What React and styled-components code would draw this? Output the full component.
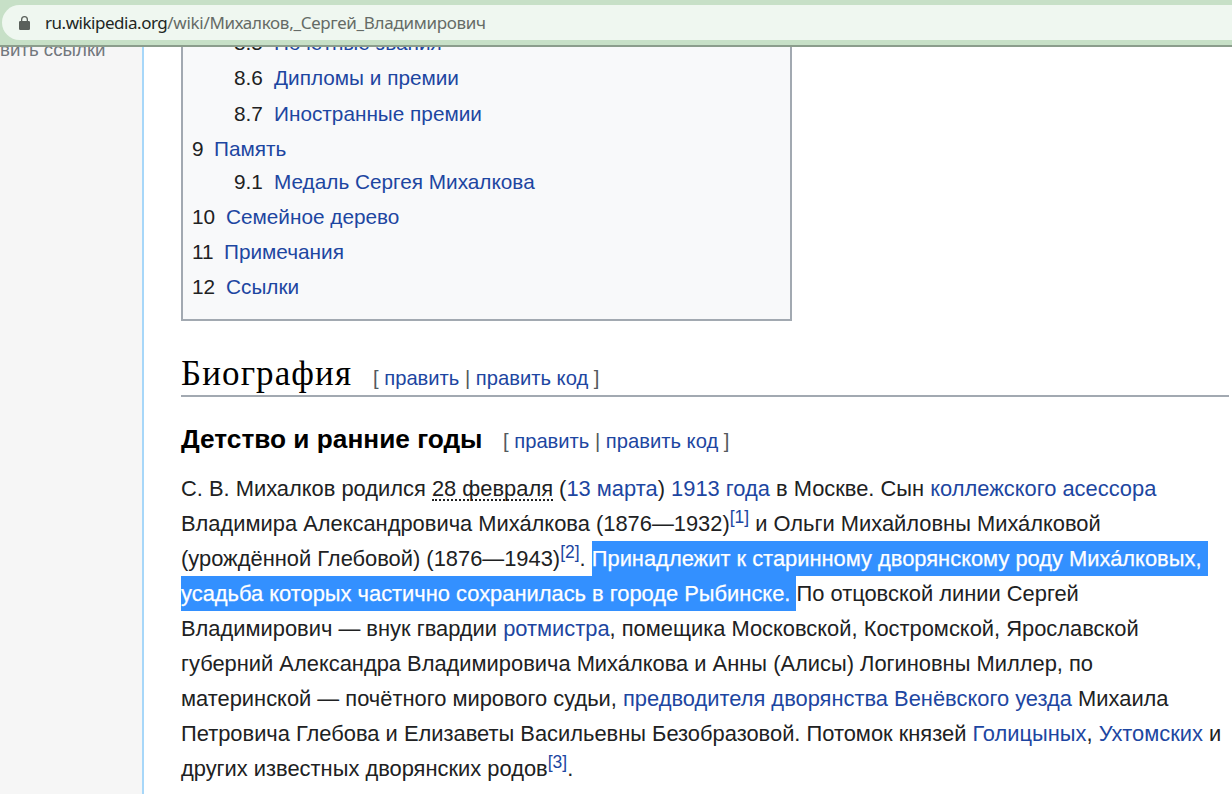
import styled, { createGlobalStyle } from 'styled-components';

const GlobalStyle = createGlobalStyle`
  * {
    box-sizing: border-box;
  }
  body {
    margin: 0;
    overflow: hidden;
    background: #ffffff;
    color: #202122;
    font-family: 'Liberation Sans', Arial, sans-serif;
  }
`;

const Page = styled.div`
  display: flex;
  flex-direction: column;
  height: 794px;
  overflow: hidden;
`;

const Toolbar = styled.header`
  flex: none;
  height: 47px;
  padding: 5px 0 5px 2px;
  background: #c7e0c7;
  border-bottom: 2px solid #8b9d8c;
`;

const AddressBar = styled.div`
  display: flex;
  align-items: center;
  height: 35px;
  padding-left: 17px;
  border-radius: 18px 0 0 18px;
  background: #eff7f0;
`;

const LockIcon = styled.svg`
  width: 11px;
  height: 14px;
  margin-right: 15px;
  fill: #5a605b;
`;

const Url = styled.span`
  color: #656b66;
  font-family: 'Noto Sans', 'Open Sans', sans-serif;
  font-size: 17px;
  letter-spacing: -0.3px;
  white-space: nowrap;
`;

const Host = styled.span`
  color: #222623;
  letter-spacing: -0.47px;
`;

const Main = styled.div`
  display: flex;
  flex: 1;
  min-height: 0;
  overflow: hidden;
`;

const Sidebar = styled.aside`
  flex: none;
  width: 144px;
  overflow: hidden;
  background: #f6f6f6;
  border-right: 2px solid #a7d7f9;
`;

const SidebarItem = styled.div`
  margin-top: -10px;
  color: #72777d;
  font-size: 18.7px;
  line-height: 26px;
  white-space: nowrap;
`;

const Article = styled.main`
  flex: 1;
  min-width: 0;
  padding: 0 3px 0 37px;
`;

const Toc = styled.nav`
  width: 611px;
  height: 296px;
  margin-top: -22px;
  padding-left: 9px;
  background: #f8f9fa;
  border: 2px solid #a2a9b1;
  border-top: none;
`;

const TocRow = styled.div`
  display: flex;
  height: ${({ $height }) => $height || 35}px;
  padding-left: ${({ $nested }) => ($nested ? 42 : 0)}px;
  font-size: 20.78px;
  line-height: 35px;
  white-space: nowrap;
`;

const TocNumber = styled.span`
  width: ${({ $width }) => $width}px;
`;

const Link = styled.a`
  color: #1d46a1;
`;

const SectionTitle = styled.h2`
  display: flex;
  align-items: baseline;
  height: 42px;
  margin: 34px 0 0;
  border-bottom: 2px solid #a2a9b1;
  color: #000000;
  font-family: 'Liberation Serif', serif;
  font-size: 35px;
  font-weight: 400;
  line-height: 38px;
`;

const SubsectionTitle = styled.h3`
  display: flex;
  align-items: baseline;
  height: 40px;
  margin: 23px 0 11px;
  color: #000000;
  font-size: 26.25px;
  font-weight: 700;
  line-height: 39px;
`;

const TitleText = styled.span`
  width: ${({ $width }) => $width}px;
  letter-spacing: ${({ $spacing }) => $spacing || 0}px;
  white-space: nowrap;
`;

const EditSection = styled.span`
  color: #54595d;
  font-family: 'Liberation Sans', Arial, sans-serif;
  font-size: 20.2px;
  font-weight: 400;
  white-space: nowrap;
`;

const Line = styled.div`
  height: 35px;
  font-size: 21.88px;
  line-height: 35px;
  white-space: pre;
`;

const OldDate = styled.abbr`
  display: inline-block;
  height: 24px;
  border-bottom: 2px dotted #202122;
  line-height: 24px;
  text-decoration: none;
`;

const Ref = styled.sup`
  color: #1d46a1;
  font-size: 17.5px;
  line-height: 1;
`;

const Selected = styled.span`
  display: inline-block;
  height: 35px;
  background: #3390ff;
  color: #ffffff;
  vertical-align: top;
  -webkit-text-stroke: 0.25px #ffffff;
`;

const tocItems = [
  { number: '8.5', title: 'Почётные звания', nested: true, width: 40 },
  { number: '8.6', title: 'Дипломы и премии', nested: true, width: 40, height: 36 },
  { number: '8.7', title: 'Иностранные премии', nested: true, width: 40 },
  { number: '9', title: 'Память', width: 22, height: 33 },
  { number: '9.1', title: 'Медаль Сергея Михалкова', nested: true, width: 40 },
  { number: '10', title: 'Семейное дерево', width: 34 },
  { number: '11', title: 'Примечания', width: 32 },
  { number: '12', title: 'Ссылки', width: 34 },
];

const EditLinks = () => (
  <EditSection>
    [ <Link>править</Link> | <Link>править код</Link> ]
  </EditSection>
);

const App = () => {
  return (
    <>
      <GlobalStyle />
      <Page>
        <Toolbar>
          <AddressBar>
            <LockIcon viewBox="0 0 11 14">
              <path
                fillRule="evenodd"
                d="M1.3 5H2V3.5a3.5 3.5 0 0 1 7 0V5h.7A1.3 1.3 0 0 1 11 6.3v6.4A1.3 1.3 0 0 1 9.7 14H1.3A1.3 1.3 0 0 1 0 12.7V6.3A1.3 1.3 0 0 1 1.3 5ZM3.3 5h4.4V3.5a2.2 2.2 0 0 0-4.4 0Z"
              />
            </LockIcon>
            <Url>
              <Host>ru.wikipedia.org</Host>/wiki/Михалков,_Сергей_Владимирович
            </Url>
          </AddressBar>
        </Toolbar>
        <Main>
          <Sidebar>
            <SidebarItem>вить ссылки</SidebarItem>
          </Sidebar>
          <Article>
            <Toc>
              {tocItems.map((item) => (
                <TocRow key={item.number} $nested={item.nested} $height={item.height}>
                  <TocNumber $width={item.width}>{item.number}</TocNumber>
                  <Link>{item.title}</Link>
                </TocRow>
              ))}
            </Toc>
            <SectionTitle>
              <TitleText $width={192} $spacing={1.1}>
                Биография
              </TitleText>
              <EditLinks />
            </SectionTitle>
            <SubsectionTitle>
              <TitleText $width={322}>Детство и ранние годы</TitleText>
              <EditLinks />
            </SubsectionTitle>
            <Line>
              С. В. Михалков родился <OldDate>28 февраля</OldDate> (<Link>13 марта</Link>){' '}
              <Link>1913 года</Link> в Москве. Сын <Link>коллежского асессора</Link>
            </Line>
            <Line>
              Владимира Александровича Миха́лкова (1876—1932)<Ref>[1]</Ref> и Ольги Михайловны
              Миха́лковой
            </Line>
            <Line>
              (урождённой Глебовой) (1876—1943)<Ref>[2]</Ref>.{' '}
              <Selected>Принадлежит к старинному дворянскому роду Миха́лковых, </Selected>
            </Line>
            <Line>
              <Selected>усадьба которых частично сохранилась в городе Рыбинске. </Selected>По
              отцовской линии Сергей
            </Line>
            <Line>
              Владимирович — внук гвардии <Link>ротмистра</Link>, помещика Московской, Костромской,
              Ярославской
            </Line>
            <Line>
              губерний Александра Владимировича Миха́лкова и Анны (Алисы) Логиновны Миллер, по
            </Line>
            <Line>
              материнской — почётного мирового судьи,{' '}
              <Link>предводителя дворянства Венёвского уезда</Link> Михаила
            </Line>
            <Line>
              Петровича Глебова и Елизаветы Васильевны Безобразовой. Потомок князей{' '}
              <Link>Голицыных</Link>, <Link>Ухтомских</Link> и
            </Line>
            <Line>
              других известных дворянских родов<Ref>[3]</Ref>.
            </Line>
          </Article>
        </Main>
      </Page>
    </>
  );
};

export default App;
